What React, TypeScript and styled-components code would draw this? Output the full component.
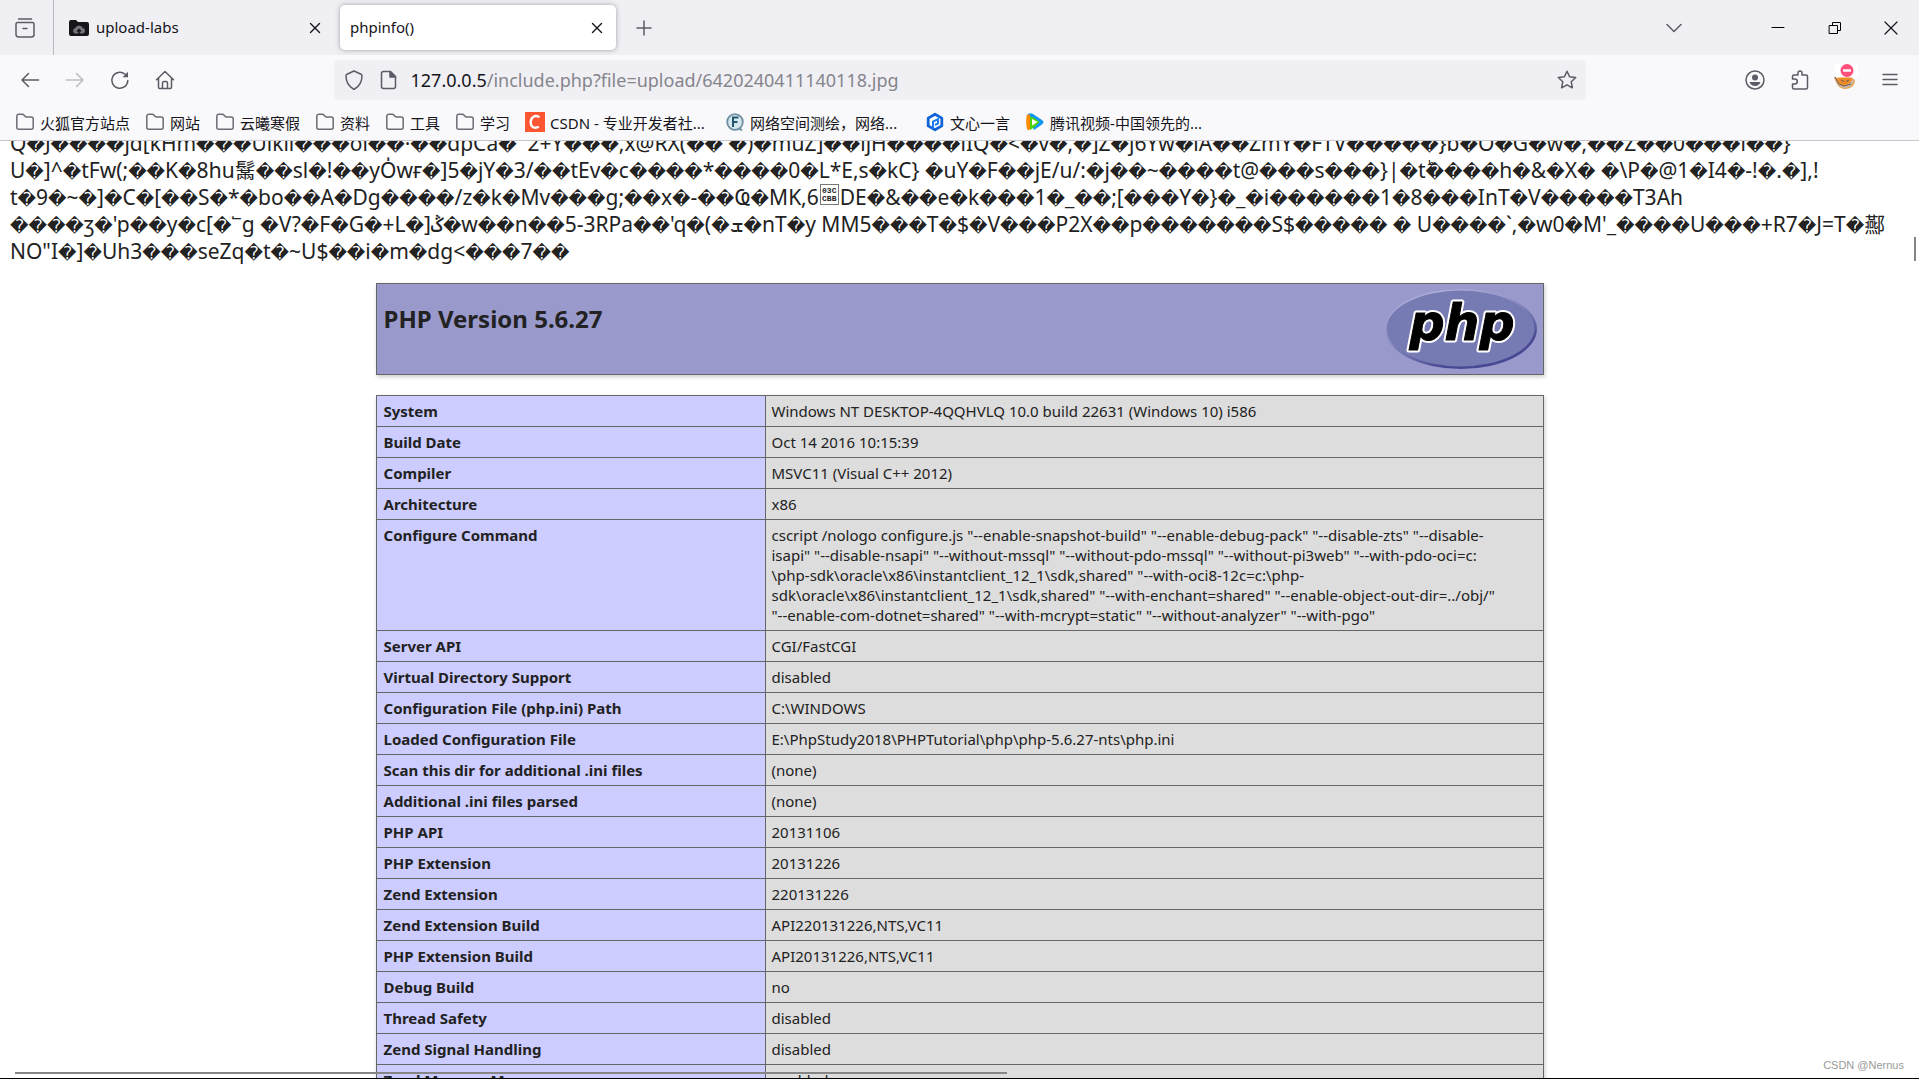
import React from "react";
import styled, { createGlobalStyle } from "styled-components";

const ui = `"Noto Sans", "Noto Sans CJK SC", sans-serif`;

const GlobalStyle = createGlobalStyle`
  * { box-sizing: border-box; }
  body { margin: 0; background: #fff; overflow: hidden; font-family: ${ui}; }
  button { font: inherit; }
`;

const Window = styled.div`
  height: 100vh;
  display: flex;
  flex-direction: column;
  border-bottom: 1px solid #000;
  overflow: hidden;
`;

const TabBar = styled.header`
  height: 55px;
  flex: none;
  display: flex;
  align-items: center;
  background: #f0f0f4;
  color: #15141a;
`;

const IconButton = styled.button<{ $w?: number; $color?: string }>`
  width: ${(p) => p.$w ?? 45}px;
  height: 40px;
  padding: 0;
  border: 0;
  flex: none;
  display: flex;
  align-items: center;
  justify-content: center;
  background: transparent;
  color: ${(p) => p.$color ?? "#5b5b66"};
`;

const Archive = styled.div`
  width: 54px;
  height: 100%;
  flex: none;
  display: flex;
  align-items: center;
  padding-left: 2px;
  border-right: 1px solid #b9b9c0;
`;

const Tabs = styled.div`
  display: flex;
  gap: 6px;
  padding-left: 4px;
`;

const Tab = styled.div<{ $active?: boolean }>`
  width: 276px;
  height: 45px;
  flex: none;
  padding: 0 8px 0 10px;
  display: flex;
  align-items: center;
  gap: 6px;
  border-radius: 5px;
  font-size: 15px;
  background: ${(p) => (p.$active ? "#fff" : "transparent")};
  box-shadow: ${(p) => (p.$active ? "0 0 5px rgba(90, 90, 102, 0.55)" : "none")};
`;

const TabTitle = styled.span`
  flex: 1;
  padding-bottom: 2px;
  white-space: nowrap;
`;

const WindowControls = styled.div`
  display: flex;
  margin-left: 50px;
`;

const Spacer = styled.div`
  flex: 1;
`;

const NavBar = styled.nav`
  height: 50px;
  flex: none;
  display: flex;
  align-items: center;
  padding: 0 7px;
  background: #f9f9fb;
`;

const NavGroup = styled.div<{ $side: "left" | "right" }>`
  flex: 1 1 0;
  display: flex;
  justify-content: ${(p) => (p.$side === "left" ? "flex-start" : "flex-end")};
`;

const UrlBar = styled.div`
  flex: 0 1 1252px;
  height: 40px;
  display: flex;
  align-items: center;
  padding-left: 1px;
  border-radius: 5px;
  background: #f0f0f4;
  font-size: 18px;
  color: #15141a;
`;

const UrlLabel = styled.label`
  padding-left: 6px;
`;

const UrlInput = styled.input`
  flex: 1;
  min-width: 0;
  padding: 0;
  border: 0;
  outline: 0;
  background: transparent;
  font: inherit;
  color: #85858c;
`;

const Bookmarks = styled.div`
  height: 36px;
  flex: none;
  display: flex;
  gap: 15px;
  padding: 0 15px;
  background: #f9f9fb;
  border-bottom: 1px solid #c8c8cc;
`;

const Bookmark = styled.a`
  height: 34px;
  display: flex;
  align-items: center;
  gap: 5px;
  font-size: 15px;
  color: #15141a;
  text-decoration: none;
  white-space: nowrap;
`;

const BookmarkLabel = styled.span<{ $w?: number }>`
  width: ${(p) => (p.$w ? `${p.$w}px` : "auto")};
`;

const Page = styled.main`
  position: relative;
  flex: 1;
  min-height: 0;
  overflow: hidden;
  color: #222;
`;

const RawBytes = styled.div`
  margin: -11px 10px 0;
  font-family: "Noto Sans", "Noto Sans CJK SC", "DejaVu Sans", sans-serif;
  font-size: 21px;
  line-height: 27px;
`;

const RawLine = styled.div`
  height: 27px;
  white-space: pre;
`;

const Unknown = styled.span`
  font-family: "DejaVu Sans", sans-serif;
  font-size: 18px;
`;

const HexBox = styled.span`
  display: inline-block;
  width: 19px;
  height: 21px;
  margin: 0 1px;
  padding-top: 2px;
  vertical-align: top;
  border: 1px solid #777;
  font: 700 8px/8px "Liberation Mono", monospace;
  text-align: center;
`;

const Info = styled.div`
  width: 1168px;
  max-width: 100%;
  margin: 18px auto 0;
`;

const Banner = styled.div`
  height: 92px;
  display: flex;
  align-items: flex-start;
  justify-content: space-between;
  padding: 5px 6px 5px 7px;
  background: #9999cc;
  border: 1px solid #666;
  box-shadow: 1px 2px 4px #ccc;
`;

const Title = styled.h1`
  margin: 14px 0 0;
  font-size: 24px;
  line-height: 32px;
  font-weight: 700;
`;

const InfoTable = styled.table`
  width: 100%;
  margin-top: 20px;
  border-collapse: collapse;
  table-layout: fixed;
  box-shadow: 1px 2px 4px #ccc;
  font-size: 15px;
  line-height: 20px;
`;

const Key = styled.th`
  width: 389px;
  padding: 5px 7px;
  border: 1px solid #666;
  background: #ccccff;
  text-align: left;
  vertical-align: top;
  font-weight: 700;
`;

const Value = styled.td`
  padding: 5px 6px;
  border: 1px solid #666;
  background: #ddd;
  vertical-align: top;
  white-space: pre;
`;

const VThumb = styled.div`
  position: absolute;
  top: 96px;
  right: 3px;
  width: 2px;
  height: 24px;
  background: #858585;
`;

const HThumb = styled.div`
  position: absolute;
  left: 15px;
  bottom: 4px;
  width: 992px;
  height: 2px;
  background: #858585;
`;

const Watermark = styled.div`
  position: absolute;
  right: 15px;
  bottom: 5px;
  font: 11px/16px "Liberation Sans", sans-serif;
  color: #999;
`;

type IconProps = { children: React.ReactNode; size?: number; sw?: number };
const Icon = ({ children, size = 20, sw = 1.5 }: IconProps) => (
  <svg width={size} height={size} viewBox={`0 0 ${size} ${size}`} fill="none" stroke="currentColor" strokeWidth={sw} strokeLinecap="round" strokeLinejoin="round" aria-hidden="true">
    {children}
  </svg>
);

const Close = () => (
  <Icon size={12} sw={1.4}><path d="M1.5 1.5l9 9M10.500 1.500l-9 9" /></Icon>
);

const FolderIcon = () => (
  <Icon><path d="M1.800 4.200a2 2 0 0 1 2-2h3.600a2 2 0 0 1 1.500.7l1.100 1.300a2 2 0 0 0 1.500.7h4.700a2 2 0 0 1 2 2v8.300a2 2 0 0 1-2 2H3.800a2 2 0 0 1-2-2z" stroke="#6b6b76" /></Icon>
);

const PhpLogo = () => (
  <svg width="152" height="80" viewBox="0 0 152 80" role="img" aria-label="PHP logo">
    <defs>
      <linearGradient id="rim" x1="0.2" y1="0" x2="0.8" y2="1">
        <stop offset="0" stopColor="#b4b4dc" />
        <stop offset="0.3" stopColor="#9c9ccb" />
        <stop offset="0.55" stopColor="#7377b0" />
        <stop offset="0.8" stopColor="#484893" />
        <stop offset="1" stopColor="#484893" />
      </linearGradient>
    </defs>
    <ellipse cx="76" cy="40" rx="76" ry="40" fill="url(#rim)" />
    <ellipse cx="75.500" cy="39.500" rx="74" ry="38" fill="#777bb4" />
    <text x="77" y="51" textAnchor="middle" fontFamily="DejaVu Sans, sans-serif" fontWeight="700" fontStyle="italic" fontSize="49" stroke="#fff" strokeWidth="5" strokeLinejoin="round">php</text>
    <text x="77" y="51" textAnchor="middle" fontFamily="DejaVu Sans, sans-serif" fontWeight="700" fontStyle="italic" fontSize="49" fill="#000" stroke="#000" strokeWidth="1">php</text>
  </svg>
);

const rawLines = [
  "Q�J����jd[kHm���Uikil���oi��·��dpCa�  2+Y���,x@RX(�� �)�muZ]��ijH����iIQ�<�v�,�]Z�j6Yw�iA��ZmY�FTV�����}b�O�G�w�,��Z��0���i��}",
  "U�]^�tFw(;��K�8հu鬗��sl�!��yO̍wғ�]5�jY�3/��tEv�c����*����0�L*E,s�kC} �uY�F��jE/u/:�j��~����t@���s���}|�tؕ����h�&�X� �\\P�@1�I4�-!�.�],!",
  "t�9�~�]�C�[��S�*�bo��A�Dg����/z�k�Mv���g;��x�-��Ҩ�MK,6#DE�&��e�k���1�_��;[���Y�}�_�i������1�8���InT�V�����T3Ah",
  "����ʒ�'p��y�c[�՟g �V?�F�G�+L�]ݣ�w��n��5-3RPa��'q�(�ܫ�nT�y MM5���T�$�V���P2X��p�������S$����� � U����`,�w0�M'_����U���+R7�J=T�酀",
  "NO\"I�]�Uh3���seZq�t�~U$��i�m�dg<���7��",
];

const rows: [string, string][] = [
  ["System", "Windows NT DESKTOP-4QQHVLQ 10.0 build 22631 (Windows 10) i586"],
  ["Build Date", "Oct 14 2016 10:15:39"],
  ["Compiler", "MSVC11 (Visual C++ 2012)"],
  ["Architecture", "x86"],
  ["Configure Command", [
    'cscript /nologo configure.js "--enable-snapshot-build" "--enable-debug-pack" "--disable-zts" "--disable-',
    'isapi" "--disable-nsapi" "--without-mssql" "--without-pdo-mssql" "--without-pi3web" "--with-pdo-oci=c:',
    '\\php-sdk\\oracle\\x86\\instantclient_12_1\\sdk,shared" "--with-oci8-12c=c:\\php-',
    'sdk\\oracle\\x86\\instantclient_12_1\\sdk,shared" "--with-enchant=shared" "--enable-object-out-dir=../obj/"',
    '"--enable-com-dotnet=shared" "--with-mcrypt=static" "--without-analyzer" "--with-pgo"',
  ].join("\n")],
  ["Server API", "CGI/FastCGI"],
  ["Virtual Directory Support", "disabled"],
  ["Configuration File (php.ini) Path", "C:\\WINDOWS"],
  ["Loaded Configuration File", "E:\\PhpStudy2018\\PHPTutorial\\php\\php-5.6.27-nts\\php.ini"],
  ["Scan this dir for additional .ini files", "(none)"],
  ["Additional .ini files parsed", "(none)"],
  ["PHP API", "20131106"],
  ["PHP Extension", "20131226"],
  ["Zend Extension", "220131226"],
  ["Zend Extension Build", "API220131226,NTS,VC11"],
  ["PHP Extension Build", "API20131226,NTS,VC11"],
  ["Debug Build", "no"],
  ["Thread Safety", "disabled"],
  ["Zend Signal Handling", "disabled"],
  ["Zend Memory Manager", "enabled"],
];

const folders = ["火狐官方站点", "网站", "云曦寒假", "资料", "工具", "学习"];

const renderRaw = (line: string) =>
  line.split(/(\uFFFD+|#)/).map((part, i) => {
    if (part === "#") return <HexBox key={i}>03C<br />CBB</HexBox>;
    if (part.startsWith("\uFFFD")) return <Unknown key={i}>{part}</Unknown>;
    return part;
  });

export default function App() {
  return (
    <Window>
      <GlobalStyle />
      <TabBar>
        <Archive>
          <IconButton aria-label="Recent browsing">
            <Icon><path d="M3.500 1h13M2.500 4.500h15a1.500 1.500 0 0 1 1.500 1.500v10.500a2.500 2.500 0 0 1-2.500 2.500h-13A2.500 2.500 0 0 1 1 16.500V6a1.500 1.500 0 0 1 1.500-1.500zM8 10.500h4" /></Icon>
          </IconButton>
        </Archive>
        <Tabs>
          <Tab>
            <svg width="22" height="20" viewBox="0 0 22 20" aria-hidden="true">
              <path d="M1 4q0-2 2-2h5l2 2h9q2 0 2 2v10q0 2-2 2H3q-2 0-2-2z" fill="#15161a" />
              <path d="M7 15.500a2.800 2.800 0 0 1 .3-5.400 4 4 0 0 1 7.500 0 2.800 2.800 0 0 1 .3 5.400z" fill="#74747a" />
              <path d="M11 17v-5M9 13.500l2-2 2 2" fill="none" stroke="#15161a" strokeWidth="1.500" />
            </svg>
            <TabTitle>upload-labs</TabTitle>
            <IconButton $w={22} $color="#15141a" aria-label="Close tab"><Close /></IconButton>
          </Tab>
          <Tab $active>
            <TabTitle>phpinfo()</TabTitle>
            <IconButton $w={22} $color="#15141a" aria-label="Close tab"><Close /></IconButton>
          </Tab>
        </Tabs>
        <IconButton $w={55} aria-label="New tab"><Icon size={16}><path d="M8 1v14M1 8h14" /></Icon></IconButton>
        <Spacer />
        <IconButton $w={50} aria-label="List all tabs"><Icon size={16}><path d="M1 4.500l7 7 7-7" /></Icon></IconButton>
        <WindowControls>
          <IconButton $w={57} $color="#000" aria-label="Minimize"><Icon size={14} sw={1}><path d="M1 6.500h12" /></Icon></IconButton>
          <IconButton $w={57} $color="#000" aria-label="Restore"><Icon size={14} sw={1}><path d="M1.500 4.500h8v8h-8zM4.500 4.500v-3h8v8h-3" /></Icon></IconButton>
          <IconButton $w={56} $color="#15141a" aria-label="Close window"><Icon size={14} sw={1.2}><path d="M1 1l12 12M13 1L1 13" /></Icon></IconButton>
        </WindowControls>
      </TabBar>

      <NavBar>
        <NavGroup $side="left">
          <IconButton aria-label="Back"><Icon><path d="M18.500 10H2M8.500 3.500L2 10l6.500 6.500" /></Icon></IconButton>
          <IconButton $color="#bcbcc2" aria-label="Forward"><Icon><path d="M1.500 10H18M11.500 3.500L18 10l-6.500 6.500" /></Icon></IconButton>
          <IconButton aria-label="Reload"><Icon><path d="M17.800 10.500A8 8 0 1 1 15 4.200l1.500 1.500" /><path d="M18 1.800v5.400h-5.400z" fill="currentColor" stroke="none" /></Icon></IconButton>
          <IconButton aria-label="Home"><Icon><path d="M1.500 9.800L10 1.500l8.500 8.300M3.500 8v9.300q0 1.200 1.200 1.200h10.600q1.200 0 1.200-1.200V8M7.500 18.500V13q0-1.500 1.500-1.500h2q1.500 0 1.500 1.500v5.500" /></Icon></IconButton>
        </NavGroup>
        <UrlBar>
          <IconButton $w={38} aria-label="Tracking protection"><Icon><path d="M10 1l7 3.200q1 .5 1 1.600c0 6-2.500 10.700-8 13.700C4.500 16.500 2 11.800 2 5.800q0-1.100 1-1.600z" /></Icon></IconButton>
          <IconButton $w={32} aria-label="Site information"><Icon><path d="M4.500 1.500h7l5 5v10q0 2-2 2h-10q-2 0-2-2v-13q0-2 2-2z" /><path d="M11 1.500v5.500h5.500z" fill="currentColor" /></Icon></IconButton>
          <UrlLabel htmlFor="url">127.0.0.5</UrlLabel>
          <UrlInput id="url" defaultValue="/include.php?file=upload/6420240411140118.jpg" />
          <IconButton $w={38} aria-label="Bookmark this page"><Icon><path d="M10 1.200l2.600 5.600 6.100.7-4.500 4.200 1.200 6.100-5.400-3-5.400 3 1.200-6.100L1.300 7.500l6.100-.7z" /></Icon></IconButton>
        </UrlBar>
        <NavGroup $side="right">
          <IconButton aria-label="Account">
            <Icon><circle cx="10" cy="10" r="9" /><circle cx="10" cy="7.500" r="3" fill="currentColor" stroke="none" /><path d="M4.500 12h11c-.8 2.500-3 4-5.500 4s-4.700-1.500-5.500-4z" fill="currentColor" stroke="none" /></Icon>
          </IconButton>
          <IconButton aria-label="Extensions">
            <Icon><path d="M2.500 9V6.500q0-1.500 1.500-1.500h4V3a2 2 0 0 1 4 0v2h4q1.500 0 1.500 1.500v11q0 1.500-1.500 1.500H4q-1.500 0-1.500-1.500V14h2.300a2.200 2.200 0 0 0 0-5z" /></Icon>
          </IconButton>
          <IconButton aria-label="User script extension">
            <svg width="26" height="32" viewBox="0 0 26 32" aria-hidden="true">
              <path d="M2 13l4 1h14l3 2c0 6-5 9-10 9-6 0-9-5-11-12z" fill="#eea04c" />
              <path d="M3 13c2 7 6 10 11 9l8-7v2c-2 5-5 7-10 7-5-1-8-4-9-11z" fill="#c9b9a7" />
              <path d="M6 13h14l-2 6-6 2-5-2z" fill="#f08a24" />
              <path d="M9 16l3 1.500M14 17.500l3-1.500M3 13l4 7 5 2 7-2" stroke="#665a55" fill="none" />
              <rect x="3" y="0" width="23" height="13.500" rx="2" fill="#fff" />
              <circle cx="15" cy="6.500" r="6.500" fill="#ff4f7b" />
              <path d="M11 6.500h8" stroke="#fff" strokeWidth="2.500" />
            </svg>
          </IconButton>
          <IconButton aria-label="Menu"><Icon size={16}><path d="M1 2.500h14M1 7.500h14M1 12.500h14" /></Icon></IconButton>
        </NavGroup>
      </NavBar>

      <Bookmarks>
        {folders.map((name) => (
          <Bookmark href="#" key={name}><FolderIcon /><BookmarkLabel>{name}</BookmarkLabel></Bookmark>
        ))}
        <Bookmark href="#">
          <svg width="20" height="20" viewBox="0 0 20 20" aria-hidden="true">
            <rect width="20" height="20" fill="#fc5531" />
            <path d="M14.500 5.200C10 2.500 5.800 5 5.700 10.200c0 5 4 6.800 8.200 4.600" fill="none" stroke="#fff" strokeWidth="2.400" />
          </svg>
          <BookmarkLabel $w={160}>CSDN - 专业开发者社...</BookmarkLabel>
        </Bookmark>
        <Bookmark href="#">
          <svg width="20" height="20" viewBox="0 0 20 20" aria-hidden="true">
            <circle cx="10" cy="10" r="7.800" fill="#d6e8ef" stroke="#6f8fa0" strokeWidth="1.800" />
            <path d="M8 15V5.500h5.500M8 10h4.500" fill="none" stroke="#23566f" strokeWidth="2" />
            <path d="M14 16l3 2.500" stroke="#6f8fa0" strokeWidth="2" />
          </svg>
          <BookmarkLabel $w={160}>网络空间测绘，网络...</BookmarkLabel>
        </Bookmark>
        <Bookmark href="#">
          <svg width="20" height="20" viewBox="0 0 20 20" aria-hidden="true">
            <path d="M10 2.200l6.800 3.900v7.800L10 17.800l-6.800-3.900V6.100z" fill="#fff" stroke="#1263d8" strokeWidth="2.800" strokeLinejoin="round" />
            <path d="M8 17V9.500l5-2.500v4.500l-3 1.500" fill="none" stroke="#1b7df0" strokeWidth="2" />
          </svg>
          <BookmarkLabel>文心一言</BookmarkLabel>
        </Bookmark>
        <Bookmark href="#">
          <svg width="20" height="20" viewBox="0 0 20 20" aria-hidden="true">
            <path d="M2 3Q4 0 8 2l9 6q3 2 0 4.500L9 18z" fill="#1296f5" />
            <path d="M1.500 4Q3 1 5 3v14q-1.500 2.500-3 0-1.500-6-.5-13z" fill="#ff8a00" />
            <path d="M5 4.500q5 1 9.500 5.500Q10 15.500 5 18z" fill="#4fd20e" />
            <path d="M7 7l5.500 3L7 13.500z" fill="#fff" />
          </svg>
          <BookmarkLabel $w={160}>腾讯视频-中国领先的...</BookmarkLabel>
        </Bookmark>
      </Bookmarks>

      <Page>
        <RawBytes>
          {rawLines.map((line, i) => <RawLine key={i}>{renderRaw(line)}</RawLine>)}
        </RawBytes>
        <Info>
          <Banner>
            <Title>PHP Version 5.6.27</Title>
            <PhpLogo />
          </Banner>
          <InfoTable>
            <tbody>
              {rows.map(([k, v]) => (
                <tr key={k}><Key scope="row">{k}</Key><Value>{v}</Value></tr>
              ))}
            </tbody>
          </InfoTable>
        </Info>
        <VThumb />
        <HThumb />
        <Watermark>CSDN @Nernus</Watermark>
      </Page>
    </Window>
  );
}
